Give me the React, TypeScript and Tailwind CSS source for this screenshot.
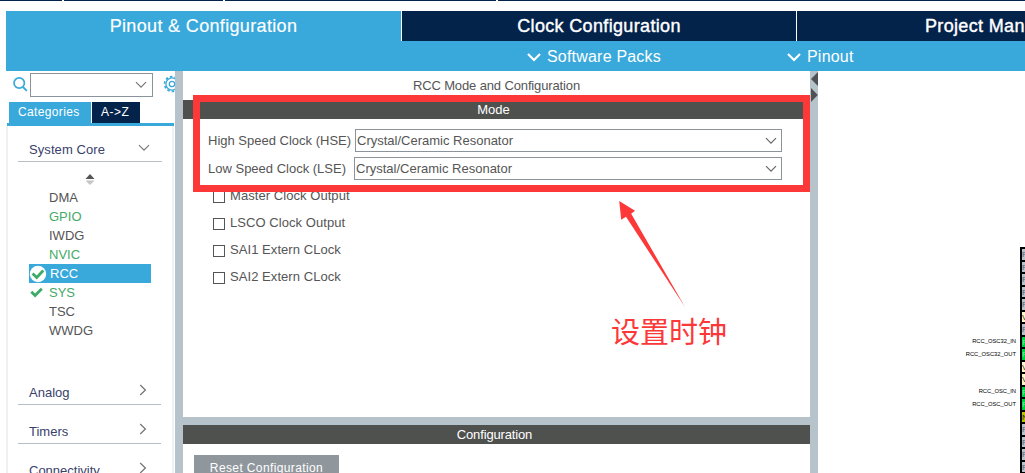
import React from "react";

type Peripheral = { name: string; enabled?: boolean; selected?: boolean; checked?: boolean };

const peripherals: Peripheral[] = [
  { name: "DMA" },
  { name: "GPIO", enabled: true },
  { name: "IWDG" },
  { name: "NVIC", enabled: true },
  { name: "RCC", selected: true, checked: true },
  { name: "SYS", enabled: true, checked: true },
  { name: "TSC" },
  { name: "WWDG" },
];

const clockOutputs = ["Master Clock Output", "LSCO Clock Output", "SAI1 Extern CLock", "SAI2 Extern CLock"];

type Pin = { kind: "io" | "power" | "active" | "reset"; letter: string; label?: string };

const pins: Pin[] = [
  { kind: "io", letter: "P" },
  { kind: "io", letter: "P" },
  { kind: "io", letter: "P" },
  { kind: "io", letter: "P" },
  { kind: "io", letter: "P" },
  { kind: "power", letter: "V" },
  { kind: "io", letter: "P" },
  { kind: "active", letter: "P", label: "RCC_OSC32_IN" },
  { kind: "active", letter: "P", label: "RCC_OSC32_OUT" },
  { kind: "power", letter: "V" },
  { kind: "power", letter: "V" },
  { kind: "active", letter: "P", label: "RCC_OSC_IN" },
  { kind: "active", letter: "P", label: "RCC_OSC_OUT" },
  { kind: "reset", letter: "N" },
  { kind: "io", letter: "P" },
  { kind: "io", letter: "P" },
  { kind: "io", letter: "P" },
  { kind: "io", letter: "P" },
  { kind: "io", letter: "P" },
];

const pinStyles: Record<Pin["kind"], string> = {
  io: "bg-[#b9c4ca] text-[#50607a]",
  power: "bg-[#fff6cc] text-[#333333]",
  active: "bg-[#00cc44] text-[#7df09a]",
  reset: "bg-[#b8c400] text-[#222222]",
};

function ChevronDown({ className = "" }: { className?: string }) {
  return (
    <svg width="12" height="8" viewBox="0 0 12 8" fill="none" className={className}>
      <path d="M1 1.2 L6 6.2 L11 1.2" stroke="currentColor" strokeWidth="1.2" />
    </svg>
  );
}

function ChevronRight() {
  return (
    <svg width="8" height="12" viewBox="0 0 8 12" fill="none" className="text-[#777777]">
      <path d="M1.2 1 L6.4 6 L1.2 11" stroke="currentColor" strokeWidth="1.3" />
    </svg>
  );
}

function BoldChevron() {
  return (
    <svg width="14" height="10" viewBox="0 0 14 10" fill="none">
      <path d="M1 2 L7 8 L13 2" stroke="white" strokeWidth="2.2" />
    </svg>
  );
}

function Select({ value, className }: { value: string; className: string }) {
  return (
    <div className={`flex items-center justify-between border border-[#8b949b] bg-white pr-[4px] pl-[1px] ${className}`}>
      <span>{value}</span>
      <ChevronDown className="text-[#666666]" />
    </div>
  );
}

function Category({ name }: { name: string }) {
  return (
    <div className="mr-[11px] ml-[10px] flex h-[39px] shrink-0 items-end justify-between border-b border-[#b5bfc6] pr-[14px] pl-[11px] text-[#39416b]">
      <span className="mb-[2px] leading-[18px]">{name}</span>
      <span className="mb-[8px]">
        <ChevronRight />
      </span>
    </div>
  );
}

function Header() {
  return (
    <header className="shrink-0">
      <div className="flex h-px gap-[2px]">
        <div className="w-[62px] bg-[#03234b]" />
        <div className="w-[159px] bg-[#03234b]" />
        <div className="w-[271px] bg-[#03234b]" />
        <div className="grow bg-[#03234b]" />
      </div>
      <div className="mt-[10px] ml-[6px] h-[60px] bg-[#39a9dc] text-white">
        <div className="flex h-[30px] text-[18px] leading-[31px] tracking-[0.34px] [-webkit-text-stroke:0.15px_white]">
          <div className="w-[395px] text-center">Pinout &amp; Configuration</div>
          <div className="w-[395px] border-l border-white bg-[#03234b] text-center [-webkit-text-stroke:0.4px_white]">Clock Configuration</div>
          <div className="grow border-l border-white bg-[#03234b] pl-[128px] whitespace-nowrap [-webkit-text-stroke:0.4px_white]">Project Man</div>
        </div>
        <div className="flex h-[30px] items-center pt-px pl-[521px] text-[16px] tracking-[0.2px]">
          <div className="flex w-[260px] items-center gap-[6px]">
            <BoldChevron />
            <span>Software Packs</span>
          </div>
          <div className="flex items-center gap-[6px]">
            <BoldChevron />
            <span>Pinout</span>
          </div>
        </div>
      </div>
    </header>
  );
}

function Sidebar() {
  return (
    <aside className="flex w-[175px] shrink-0 flex-col overflow-hidden pl-[7px]">
      <div className="flex h-[31px] shrink-0 items-start pt-[2px]">
        <svg width="16" height="16" viewBox="0 0 16 16" fill="none" className="mt-[3px] ml-[5px] shrink-0">
          <circle cx="7.2" cy="7" r="5.2" stroke="#39a9dc" strokeWidth="1.7" />
          <path d="M11 11 L14.8 14.8" stroke="#39a9dc" strokeWidth="1.9" />
        </svg>
        <div className="ml-[2px] flex h-[24px] w-[123px] shrink-0 items-center justify-end border border-[#8b949b] pr-[5px]">
          <ChevronDown className="text-[#777777]" />
        </div>
        <svg width="18" height="18" viewBox="0 0 18 18" fill="none" className="mt-[2px] ml-[10px] shrink-0">
          <circle cx="9" cy="9" r="6.1" stroke="#39a9dc" strokeWidth="1.3" />
          <circle cx="9" cy="9" r="7.4" stroke="#39a9dc" strokeWidth="1.7" strokeDasharray="2.5 2.15" />
          <circle cx="9" cy="9" r="2.7" stroke="#39a9dc" strokeWidth="1.3" />
        </svg>
      </div>
      <div className="ml-[2px] flex h-[21px] shrink-0 gap-px text-[12px] leading-[21px] text-white">
        <div className="w-[82px] bg-[#39a9dc] pl-[9px] tracking-[0.35px]">Categories</div>
        <div className="w-[48px] bg-[#03234b] pl-[9px] tracking-[0.5px]">A-&gt;Z</div>
      </div>
      <div className="mr-px h-[3px] shrink-0 bg-[#39a9dc]" />
      <div className="mr-px -ml-px flex grow flex-col overflow-hidden border-x-2 border-[#f0f0f0]">
        <div className="mr-[10px] ml-[10px] flex h-[36px] shrink-0 items-center justify-between border-b border-[#b5bfc6] pr-[12px] pl-[11px] text-[#39416b]">
          <span className="mt-[12px] tracking-[0.08px]">System Core</span>
          <ChevronDown className="mt-[8px] text-[#777777]" />
        </div>
        <div className="flex h-[26px] shrink-0 justify-center pt-[12px] pr-px">
          <svg width="10" height="12" viewBox="0 0 10 12">
            <path d="M0.5 5 L5 0 L9.5 5 Z" fill="#555555" />
            <path d="M0.5 6.5 L5 11 L9.5 6.5 Z" fill="#c4c4c4" />
          </svg>
        </div>
        <ul className="ml-[21px] w-[122px] shrink-0">
          {peripherals.map((p) => (
            <li
              key={p.name}
              className={`flex h-[19px] items-center ${p.selected ? "bg-[#39a9dc] text-white" : p.enabled ? "text-[#45aa68]" : "text-[#555555]"}`}
            >
              <span className="flex w-[20px] items-center">
                {p.checked && (
                  <svg width="18" height="18" viewBox="0 0 18 18" fill="none">
                    {p.selected && <circle cx="9" cy="9" r="8.2" fill="white" />}
                    {p.selected ? (
                      <path d="M3.6 8.4 L7.7 12.4 L14.3 5.5" stroke="#3cab68" strokeWidth="2.8" />
                    ) : (
                      <path d="M2.3 7.7 L6.1 11.6 L12.8 4.8" stroke="#3cab68" strokeWidth="2.8" />
                    )}
                  </svg>
                )}
              </span>
              <span className={p.selected ? "pl-px" : ""}>{p.name}</span>
            </li>
          ))}
        </ul>
        <div className="flex flex-col pt-[26px]">
          <Category name="Analog" />
          <Category name="Timers" />
          <Category name="Connectivity" />
        </div>
      </div>
    </aside>
  );
}

function ModePanel() {
  return (
    <main className="flex w-[627px] shrink-0 flex-col text-[#555555]">
      <h1 className="h-[29px] shrink-0 text-center leading-[29px] tracking-[-0.13px]">RCC Mode and Configuration</h1>
      <h2 className="h-[19px] shrink-0 bg-[#4f514f] pr-[6px] text-center leading-[19px] text-white">Mode</h2>
      <section className="flex h-[298px] shrink-0 flex-col pt-[10px]">
        <div className="flex h-[23px] items-center pl-[25px]">
          <span className="w-[147px] whitespace-nowrap">High Speed Clock (HSE)</span>
          <Select value="Crystal/Ceramic Resonator" className="h-[23px] w-[427px]" />
        </div>
        <div className="mt-[5px] flex h-[23px] items-center pl-[25px]">
          <span className="w-[146px] whitespace-nowrap">Low Speed Clock (LSE)</span>
          <Select value="Crystal/Ceramic Resonator" className="h-[23px] w-[428px]" />
        </div>
        <div className="mt-[3px] flex flex-col pl-[30px]">
          {clockOutputs.map((label) => (
            <label key={label} className="flex h-[27px] items-center gap-[5px]">
              <span className="size-[12px] border border-[#555555] bg-white" />
              <span className="-mt-px tracking-[0.06px]">{label}</span>
            </label>
          ))}
        </div>
      </section>
      <div className="h-[8px] shrink-0 bg-[#b7c3ca]" />
      <h2 className="h-[19px] shrink-0 bg-[#4f514f] pr-[4px] text-center leading-[19px] tracking-[-0.15px] text-white">Configuration</h2>
      <section className="pt-[11px] pl-[11px]">
        <button className="block h-[27px] w-[145px] bg-[#8f979d] text-center text-[12px] leading-[27px] tracking-[0.38px] text-white">
          Reset Configuration
        </button>
      </section>
    </main>
  );
}

function SplitHandle() {
  return (
    <div className="w-[8px] shrink-0 bg-[#b7c3ca]">
      <svg width="8" height="32" viewBox="0 0 8 32">
        <path d="M8 1 L8 15 L1 8 Z" fill="#505154" />
        <path d="M1 17 L1 31 L7.8 24 Z" fill="#505154" />
      </svg>
    </div>
  );
}

function PinoutView() {
  return (
    <section className="flex grow flex-col items-end overflow-hidden pt-[176px]">
      {pins.map((pin, i) => (
        <div key={i} className="flex h-[12.5px] shrink-0 items-center">
          <span className="pt-px pr-[4px] text-[5.8px] leading-[8px] whitespace-nowrap text-black">{pin.label}</span>
          <span className="h-full w-[5px] overflow-hidden border-t-2 border-l-2 border-black">
            <span className={`block h-full w-full overflow-hidden text-[8px] leading-[11px] ${pinStyles[pin.kind]}`}>{pin.letter}</span>
          </span>
        </div>
      ))}
    </section>
  );
}

function Annotation() {
  return (
    <>
      <div className="absolute top-[95px] left-[193px] h-[97px] w-[617px] border-[7px] border-[#fc3838]" />
      <svg width="70" height="110" viewBox="0 0 70 110" className="absolute top-[199px] left-[617px]">
        <path d="M2.2 2 L18 11.8 L14.2 14.8 L68 108 L9 17.8 L4.2 20.7 Z" fill="#fc3838" />
      </svg>
      <div className="absolute top-[310px] left-[611px] font-['Noto_Sans_CJK_SC',sans-serif] text-[29px] leading-[40px] whitespace-nowrap text-[#fc3838]">
        设置时钟
      </div>
    </>
  );
}

export default function App() {
  return (
    <div className="relative flex h-[473px] w-[1025px] flex-col overflow-hidden bg-white font-['Liberation_Sans',Arial,sans-serif] text-[13px] leading-[18px]">
      <Header />
      <div className="flex min-h-0 grow">
        <Sidebar />
        <div className="w-[8px] shrink-0 bg-[#b7c3ca]" />
        <ModePanel />
        <SplitHandle />
        <PinoutView />
      </div>
      <Annotation />
    </div>
  );
}
